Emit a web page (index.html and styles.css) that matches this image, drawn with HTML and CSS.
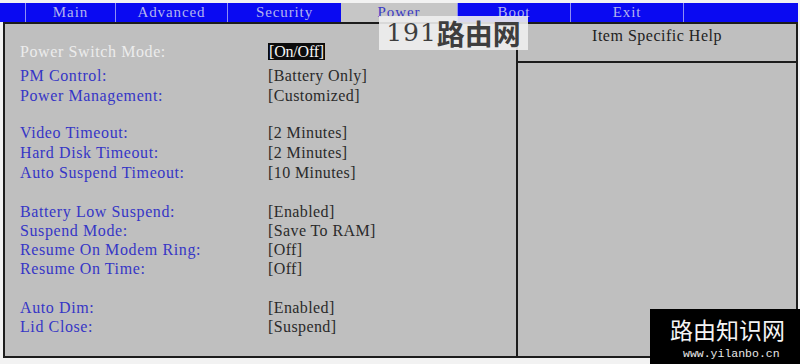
FILE: index.html
```html
<!DOCTYPE html>
<html>
<head>
<meta charset="utf-8">
<link rel="stylesheet" href="styles.css">
</head>
<body>
<div class="screen">
  <div class="tabbar">
    <div class="tab t-lead"></div>
    <div class="tab t-main">Main</div>
    <div class="tab t-adv">Advanced</div>
    <div class="tab t-sec">Security</div>
    <div class="tab t-pow active">Power</div>
    <div class="tab t-boot">Boot</div>
    <div class="tab t-exit">Exit</div>
    <div class="tab t-tail"></div>
  </div>
  <div class="frame">
    <div class="settings">
      <div class="group g0">
        <div class="row sel"><span class="label">Power Switch Mode:</span><span class="value"><span class="hl">[On/Off]</span></span></div>
      </div>
      <div class="group g1">
        <div class="row"><span class="label">PM Control:</span><span class="value">[Battery Only]</span></div>
        <div class="row"><span class="label">Power Management:</span><span class="value">[Customized]</span></div>
      </div>
      <div class="group g2">
        <div class="row"><span class="label">Video Timeout:</span><span class="value">[2 Minutes]</span></div>
        <div class="row"><span class="label">Hard Disk Timeout:</span><span class="value">[2 Minutes]</span></div>
        <div class="row"><span class="label">Auto Suspend Timeout:</span><span class="value">[10 Minutes]</span></div>
      </div>
      <div class="group g3">
        <div class="row"><span class="label">Battery Low Suspend:</span><span class="value">[Enabled]</span></div>
        <div class="row"><span class="label">Suspend Mode:</span><span class="value">[Save To RAM]</span></div>
        <div class="row"><span class="label">Resume On Modem Ring:</span><span class="value">[Off]</span></div>
        <div class="row"><span class="label">Resume On Time:</span><span class="value">[Off]</span></div>
      </div>
      <div class="group g4">
        <div class="row"><span class="label">Auto Dim:</span><span class="value">[Enabled]</span></div>
        <div class="row"><span class="label">Lid Close:</span><span class="value">[Suspend]</span></div>
      </div>
    </div>
    <div class="help">
      <div class="help-head">Item Specific Help</div>
      <div class="help-body"></div>
    </div>
  </div>
  <div class="wm-top"><span class="wm-num">191</span><span class="wm-cjk">路由网</span></div>
  <div class="wm-bottom">
    <div class="wm-title">路由知识网</div>
    <div class="wm-url">www.yilanbo.cn</div>
  </div>
</div>
</body>
</html>
```
FILE: styles.css
```css
html, body {
  margin: 0;
  padding: 0;
  background: #f2f2f2;
}
.screen {
  position: relative;
  width: 800px;
  height: 364px;
  overflow: hidden;
  background: #f2f2f2;
  font-family: "Liberation Serif", "Times New Roman", serif;
}
.tabbar {
  margin-top: 3px;
  height: 19px;
  width: 798px;
  background: #0a0af2;
  display: flex;
}
.tab {
  box-sizing: border-box;
  height: 19px;
  line-height: 19px;
  text-align: center;
  font-size: 15px;
  letter-spacing: 0.9px;
  color: #b4b4ee;
  border-left: 1px solid #8e8ef4;
}
.t-lead { width: 25px; border-left: none; }
.t-main { width: 90px; }
.t-adv { width: 112px; }
.t-sec { width: 114px; }
.t-pow { width: 116px; }
.t-boot { width: 113px; }
.t-exit { width: 113px; }
.t-tail { flex: 1; }
.tab.active {
  background: #c6c6c6;
  color: #3a3ac4;
  border-left: none;
}
.frame {
  margin-left: 3px;
  width: 795px;
  height: 336px;
  box-sizing: border-box;
  border: 2px solid #1c1c1c;
  background: #bfbfbf;
  display: grid;
  grid-template-columns: 511px 1fr;
}
.settings {
  padding: 18px 0 0 15px;
  display: flex;
  flex-direction: column;
  font-size: 16px;
}
.group { display: flex; flex-direction: column; }
.g1 { margin-top: 4px; }
.g2 { margin-top: 17px; }
.g3 { margin-top: 19px; }
.g4 { margin-top: 20px; }
.row {
  display: grid;
  grid-template-columns: 248px 1fr;
  height: 20px;
  line-height: 20px;
}
.g3 .row, .g4 .row { height: 19px; line-height: 19px; }
.label {
  color: #3636c6;
  letter-spacing: 0.6px;
  white-space: nowrap;
}
.value {
  color: #2a2a2a;
  letter-spacing: 0.4px;
  white-space: nowrap;
}
.sel .label { color: #ececec; }
.hl {
  background: #0c0c0c;
  color: #f4f4f4;
  padding: 0 1px;
  letter-spacing: -0.2px;
}
.help {
  border-left: 2px solid #1c1c1c;
  display: flex;
  flex-direction: column;
}
.help-head {
  height: 39px;
  border-bottom: 2px solid #1c1c1c;
  text-align: center;
  font-size: 16px;
  letter-spacing: 0.5px;
  color: #222;
  padding-top: 2px;
  box-sizing: border-box;
  line-height: 20px;
}
.help-body { flex: 1; }
.wm-top {
  position: absolute;
  left: 379px;
  top: 16px;
  width: 149px;
  height: 34px;
  background: rgba(238, 238, 238, 0.9);
  display: flex;
  align-items: center;
  justify-content: center;
  color: #3e3e3e;
  font-size: 27px;
  line-height: 34px;
}
.wm-num {
  font-family: "DejaVu Serif", "Liberation Serif", serif;
  font-size: 25px;
  letter-spacing: 1px;
}
.wm-cjk {
  font-family: "Noto Sans CJK SC", sans-serif;
  font-weight: 700;
  font-size: 28px;
}
.wm-bottom {
  position: absolute;
  left: 650px;
  top: 309px;
  width: 150px;
  height: 55px;
  background: #000;
  color: #f4f4f4;
  display: flex;
  flex-direction: column;
  align-items: flex-start;
}
.wm-title {
  font-family: "Noto Sans CJK SC", sans-serif;
  font-size: 23px;
  line-height: 28px;
  margin-top: 6px;
  padding-left: 20px;
}
.wm-url {
  font-family: "Liberation Mono", "DejaVu Sans Mono", monospace;
  font-size: 11.5px;
  line-height: 16px;
  margin-top: 3px;
  padding-left: 33px;
  color: #e8e8e8;
}
```
